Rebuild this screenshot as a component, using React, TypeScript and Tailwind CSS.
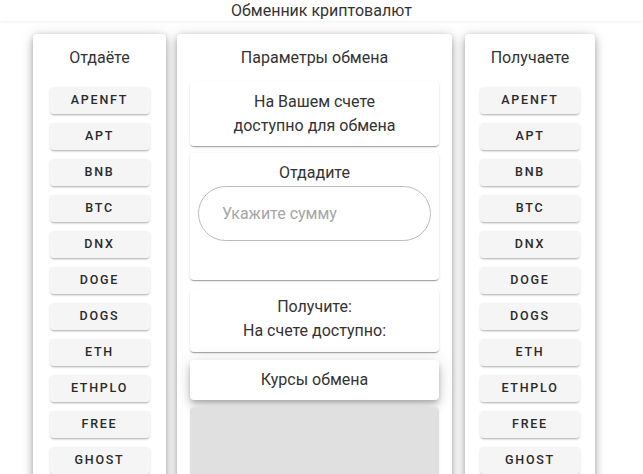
import React from 'react'

const coins = ['APENFT', 'APT', 'BNB', 'BTC', 'DNX', 'DOGE', 'DOGS', 'ETH', 'ETHPLO', 'FREE', 'GHOST']

const paper = 'bg-white rounded-[4px] shadow-[0_2px_6px_-1px_rgba(0,0,0,0.22),0_4px_8px_0_rgba(0,0,0,0.16),0_1px_14px_0_rgba(0,0,0,0.14)]'
const inner = 'bg-white rounded-[4px] shadow-[0_2px_1px_-1px_rgba(0,0,0,0.2),0_1px_1px_0_rgba(0,0,0,0.14),0_1px_3px_0_rgba(0,0,0,0.12)]'

function CoinList({ title }: { title: string }) {
  return (
    <div className="flex flex-col items-center pt-[15px]">
      <div className="text-[16px] leading-[18px] text-[#333]">{title}</div>
      <div className="mt-[20px] flex flex-col gap-[9px]">
        {coins.map((c) => (
          <button
            key={c}
            className="w-[100px] h-[27px] rounded-[4px] bg-[#f5f5f5] text-[12.5px] font-medium tracking-[0.14em] text-[#2a2a2a] shadow-[0_2px_2px_-1px_rgba(0,0,0,0.25),0_1px_3px_0_rgba(0,0,0,0.1)]"
          >
            {c}
          </button>
        ))}
      </div>
    </div>
  )
}

export default function App() {
  return (
    <div className="w-[643px] h-[474px] overflow-hidden bg-white font-['Roboto',sans-serif] text-[#333]">
      <div className="h-[21px] text-center text-[16px] leading-[21px] shadow-[0_1px_3px_rgba(0,0,0,0.07)]">
        Обменник криптовалют
      </div>

      <div className="flex items-start pl-[33px] pt-[13px]">
        <div className={`${paper} w-[133px] h-[460px]`}>
          <CoinList title="Отдаёте" />
        </div>

        <div className={`${paper} ml-[11px] w-[275px] h-[460px] px-[13px] pt-[15px] flex flex-col`}>
          <div className="text-center text-[16px] leading-[18px]">Параметры обмена</div>

          <div className={`${inner} mt-[15px] h-[64px] pt-[8px] text-center text-[16px] leading-[24px]`}>
            <div>На Вашем счете</div>
            <div>доступно для обмена</div>
          </div>

          <div className={`${inner} mt-[7px] h-[127px] pt-[8px] px-[8px] text-[16px]`}>
            <div className="text-center leading-[24px]">Отдадите</div>
            <input
              className="mt-[1px] w-full h-[55px] rounded-full border border-[#bdbdbd] px-[23px] text-[16px] outline-none placeholder:text-[#a6a6a6]"
              placeholder="Укажите сумму"
            />
          </div>

          <div className={`${inner} mt-[10px] h-[62px] pt-[5px] text-center text-[16px] leading-[24px]`}>
            <div>Получите:</div>
            <div>На счете доступно:</div>
          </div>

          <div className="mt-[8px] h-[40px] rounded-[4px] bg-white text-center text-[16px] leading-[40px] shadow-[0_3px_5px_-1px_rgba(0,0,0,0.2),0_6px_10px_0_rgba(0,0,0,0.14),0_1px_18px_0_rgba(0,0,0,0.12)]">
            Курсы обмена
          </div>

          <div className="mt-[8px] flex-1 rounded-t-[4px] bg-[#e0e0e0] shadow-[0_-1px_3px_rgba(0,0,0,0.08)]" />
        </div>

        <div className={`${paper} ml-[13px] w-[130px] h-[460px]`}>
          <CoinList title="Получаете" />
        </div>
      </div>
    </div>
  )
}
